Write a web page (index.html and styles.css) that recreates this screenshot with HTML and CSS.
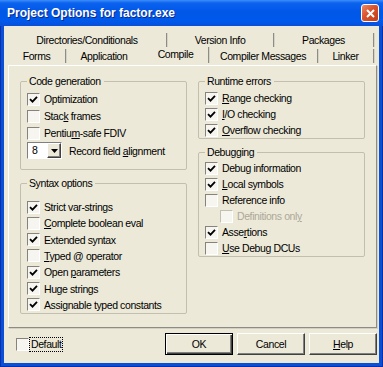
FILE: index.html
```html
<!DOCTYPE html>
<html lang="en">
  <head>
    <meta charset="UTF-8" />
    <title>Project Options for factor.exe</title>
    <link rel="stylesheet" href="styles.css">
  </head>
  <body>
    <div class="window">
      <div class="titlebar">
        <span class="title">Project Options for factor.exe</span>
        <span class="close">
          <svg width="9" height="9" viewBox="0 0 9 9"><path d="M1 1L8 8M8 1L1 8" stroke="#fff" stroke-width="2" fill="none"/></svg>
        </span>
      </div>

      <div class="client">
        <!-- tab rows -->
        <div class="tabs">
          <div class="tab-row">
            <div class="tab w-dirs">Directories/Conditionals</div>
            <div class="tab w-version">Version Info</div>
            <div class="tab w-packages">Packages</div>
          </div>
          <div class="tab-row">
            <div class="tab w-forms">Forms</div>
            <div class="tab w-app plain">Application</div>
            <div class="tab w-compile active">Compile</div>
            <div class="tab w-messages">Compiler Messages</div>
            <div class="tab w-linker">Linker</div>
          </div>
        </div>

        <div class="panel">
          <div class="col">
            <fieldset class="group code-gen">
              <legend>Code generation</legend>
              <div class="opts">
                <div class="check"><span class="box on"><svg width="9" height="9" viewBox="0 0 9 9"><path d="M1 4.2L3.5 6.7L8 1.8" stroke="#000" stroke-width="1.8" fill="none"/></svg></span><span>Optimization</span></div>
                <div class="check"><span class="box"></span><span>Stac<u>k</u> frames</span></div>
                <div class="check"><span class="box"></span><span>Pentiu<u>m</u>-safe FDIV</span></div>
                <div class="combo-row">
                  <div class="combo">
                    <span class="combo-val">8</span>
                    <span class="combo-btn"><svg width="7" height="4" viewBox="0 0 7 4"><path d="M0 0H7L3.5 4Z" fill="#000"/></svg></span>
                  </div>
                  <span>Record field <u>a</u>lignment</span>
                </div>
              </div>
            </fieldset>

            <fieldset class="group syntax">
              <legend>Syntax options</legend>
              <div class="opts tight">
                <div class="check"><span class="box on"><svg width="9" height="9" viewBox="0 0 9 9"><path d="M1 4.2L3.5 6.7L8 1.8" stroke="#000" stroke-width="1.8" fill="none"/></svg></span><span>Strict var-strings</span></div>
                <div class="check"><span class="box"></span><span><u>C</u>omplete boolean eval</span></div>
                <div class="check"><span class="box on"><svg width="9" height="9" viewBox="0 0 9 9"><path d="M1 4.2L3.5 6.7L8 1.8" stroke="#000" stroke-width="1.8" fill="none"/></svg></span><span>Extended syntax</span></div>
                <div class="check"><span class="box"></span><span><u>T</u>yped @ operator</span></div>
                <div class="check"><span class="box on"><svg width="9" height="9" viewBox="0 0 9 9"><path d="M1 4.2L3.5 6.7L8 1.8" stroke="#000" stroke-width="1.8" fill="none"/></svg></span><span>Open <u>p</u>arameters</span></div>
                <div class="check"><span class="box on"><svg width="9" height="9" viewBox="0 0 9 9"><path d="M1 4.2L3.5 6.7L8 1.8" stroke="#000" stroke-width="1.8" fill="none"/></svg></span><span>Huge strings</span></div>
                <div class="check"><span class="box on"><svg width="9" height="9" viewBox="0 0 9 9"><path d="M1 4.2L3.5 6.7L8 1.8" stroke="#000" stroke-width="1.8" fill="none"/></svg></span><span>Assignable typed constants</span></div>
              </div>
            </fieldset>
          </div>

          <div class="col">
            <fieldset class="group runtime">
              <legend>Runtime errors</legend>
              <div class="opts">
                <div class="check"><span class="box on"><svg width="9" height="9" viewBox="0 0 9 9"><path d="M1 4.2L3.5 6.7L8 1.8" stroke="#000" stroke-width="1.8" fill="none"/></svg></span><span><u>R</u>ange checking</span></div>
                <div class="check"><span class="box on"><svg width="9" height="9" viewBox="0 0 9 9"><path d="M1 4.2L3.5 6.7L8 1.8" stroke="#000" stroke-width="1.8" fill="none"/></svg></span><span><u>I</u>/O checking</span></div>
                <div class="check"><span class="box on"><svg width="9" height="9" viewBox="0 0 9 9"><path d="M1 4.2L3.5 6.7L8 1.8" stroke="#000" stroke-width="1.8" fill="none"/></svg></span><span><u>O</u>verflow checking</span></div>
              </div>
            </fieldset>

            <fieldset class="group debugging">
              <legend>Debugging</legend>
              <div class="opts">
                <div class="check"><span class="box on"><svg width="9" height="9" viewBox="0 0 9 9"><path d="M1 4.2L3.5 6.7L8 1.8" stroke="#000" stroke-width="1.8" fill="none"/></svg></span><span>Debug information</span></div>
                <div class="check"><span class="box on"><svg width="9" height="9" viewBox="0 0 9 9"><path d="M1 4.2L3.5 6.7L8 1.8" stroke="#000" stroke-width="1.8" fill="none"/></svg></span><span><u>L</u>ocal symbols</span></div>
                <div class="check"><span class="box"></span><span>Reference info</span></div>
                <div class="check sub disabled"><span class="box"></span><span>Definitions onl<u>y</u></span></div>
                <div class="check"><span class="box on"><svg width="9" height="9" viewBox="0 0 9 9"><path d="M1 4.2L3.5 6.7L8 1.8" stroke="#000" stroke-width="1.8" fill="none"/></svg></span><span>Asse<u>r</u>tions</span></div>
                <div class="check"><span class="box"></span><span><u>U</u>se Debug DCUs</span></div>
              </div>
            </fieldset>
          </div>
        </div>

        <div class="bottom-bar">
          <div class="check"><span class="box"></span><span class="focus">Default</span></div>
          <div class="buttons">
            <div class="btn default">OK</div>
            <div class="btn">Cancel</div>
            <div class="btn"><span><u>H</u>elp</span></div>
          </div>
        </div>
      </div>
    </div>
  </body>
</html>
```

FILE: styles.css
```css
* {
  box-sizing: border-box;
}
body {
  margin: 0;
  background-color: #ffffff;
  font-family: "Liberation Sans", Arial, sans-serif;
}
.window {
  width: 383px;
  height: 367px;
  display: flex;
  flex-direction: column;
  padding: 0 4px 4px;
  background-color: #0a4fd8;
  box-shadow: inset 1px 0 0 #0831a8, inset -1px 0 0 #0831a8, inset 0 -1px 0 #0831a8;
}
.titlebar {
  height: 26px;
  margin: 0 -4px;
  padding: 0 4px 0 7px;
  display: flex;
  align-items: center;
  background: linear-gradient(to bottom, #3d8ef8 0, #0b62ee 3px, #0057e8 12px, #0059eb 21px, #0a4fd8 26px);
}
.title {
  color: #ffffff;
  font-size: 12px;
  font-weight: bold;
  text-shadow: 1px 1px 0 #0a2a8c;
  white-space: nowrap;
}
.close {
  margin-left: auto;
  width: 18px;
  height: 18px;
  border: 1px solid #ffffff;
  border-radius: 3px;
  background: linear-gradient(135deg, #ec8a66 0%, #d9522b 45%, #c23d18 100%);
  display: flex;
  align-items: center;
  justify-content: center;
}
.client {
  flex: 1;
  background-color: #ece9d8;
  font-size: 10.5px;
  letter-spacing: -0.4px;
  color: #000000;
}

/* tabs */
.tabs {
  padding: 7px 0 0 4px;
}
.tab-row {
  display: flex;
  align-items: flex-start;
  height: 14px;
}
.tab-row + .tab-row {
  margin-top: 2px;
}
.tab {
  height: 14px;
  line-height: 14px;
  text-align: center;
  white-space: nowrap;
  border-right: 1px solid #8d8c86;
  box-shadow: 1px 0 0 #d6d3c5;
}
.tab.plain {
  border-right-color: transparent;
  box-shadow: none;
}
.tab.active {
  margin-top: -2px;
  height: 16px;
}
.w-dirs { width: 159px; }
.w-version { width: 107px; }
.w-packages { width: 100px; }
.w-forms { width: 58px; }
.w-app { width: 77px; }
.w-compile { width: 66px; }
.w-messages { width: 109px; }
.w-linker { width: 56px; }

/* page */
.panel {
  margin: 2px 0 0 4px;
  width: 369px;
  height: 263px;
  padding: 9px 11px 0;
  border: 1px solid;
  border-color: #ffffff #8c8b85 #8c8b85 #ffffff;
  box-shadow: 1px 1px 0 #d3d0c1;
  display: grid;
  grid-template-columns: 167px 167px;
  column-gap: 11px;
  align-content: start;
}
.col {
  display: flex;
  flex-direction: column;
}
.group {
  margin: 0;
  min-width: 0;
  padding: 0 6px;
  border: 1px solid #c2bfae;
  border-radius: 2px;
}
.group legend {
  padding: 0 3px 0 2px;
  line-height: 12px;
}
.syntax,
.debugging {
  margin-top: 7px;
}
.opts {
  display: flex;
  flex-direction: column;
  gap: 1px;
}
.opts.tight {
  gap: 0.33px;
}
.code-gen .opts { padding: 4px 0 10px; }
.syntax .opts { padding-top: 10px; }
.runtime .opts { padding-top: 3px; gap: 0; }
.debugging .opts { padding-top: 2px; gap: 0; }

.check {
  display: flex;
  align-items: center;
  height: 16px;
  white-space: nowrap;
}
.box {
  width: 13px;
  height: 13px;
  flex: none;
  margin-right: 4px;
  border: 1px solid;
  border-color: #85837c #ffffff #ffffff #85837c;
  background-color: #f6f5f0;
  display: flex;
  align-items: center;
  justify-content: center;
}
.check.sub {
  padding-left: 15px;
}
.check.disabled {
  color: #aca899;
}
.check.disabled .box {
  border-color: #c2bfb2 #ffffff #ffffff #c2bfb2;
}

.combo-row {
  display: flex;
  align-items: center;
  gap: 7px;
  height: 17px;
  white-space: nowrap;
}
.combo {
  width: 35px;
  height: 17px;
  display: flex;
  border: 1px solid;
  border-color: #808080 #ffffff #ffffff #808080;
  background-color: #ffffff;
}
.combo-val {
  flex: 1;
  padding-left: 4px;
  line-height: 15px;
}
.combo-btn {
  width: 14px;
  border: 1px solid;
  border-color: #ffffff #404040 #404040 #ffffff;
  box-shadow: inset -1px -1px 0 #808080;
  background-color: #ece9d8;
  display: flex;
  align-items: center;
  justify-content: center;
}

/* footer */
.bottom-bar {
  margin-top: 5px;
  height: 22px;
  padding: 0 2px 0 12px;
  display: flex;
  align-items: center;
}
.bottom-bar .box {
  margin-right: 1px;
}
.focus {
  outline: 1px dotted #000000;
  padding: 0 1px;
  line-height: 13px;
}
.buttons {
  margin-left: auto;
  display: flex;
  gap: 4px;
}
.btn {
  width: 68px;
  height: 22px;
  display: flex;
  align-items: center;
  justify-content: center;
  border: 1px solid;
  border-color: #ffffff #404040 #404040 #ffffff;
  box-shadow: inset -1px -1px 0 #808080;
  background-color: #ece9d8;
}
.btn.default {
  border-color: #000000;
  box-shadow: inset 1px 1px 0 #ffffff, inset -1px -1px 0 #404040, inset -2px -2px 0 #808080;
}
```
